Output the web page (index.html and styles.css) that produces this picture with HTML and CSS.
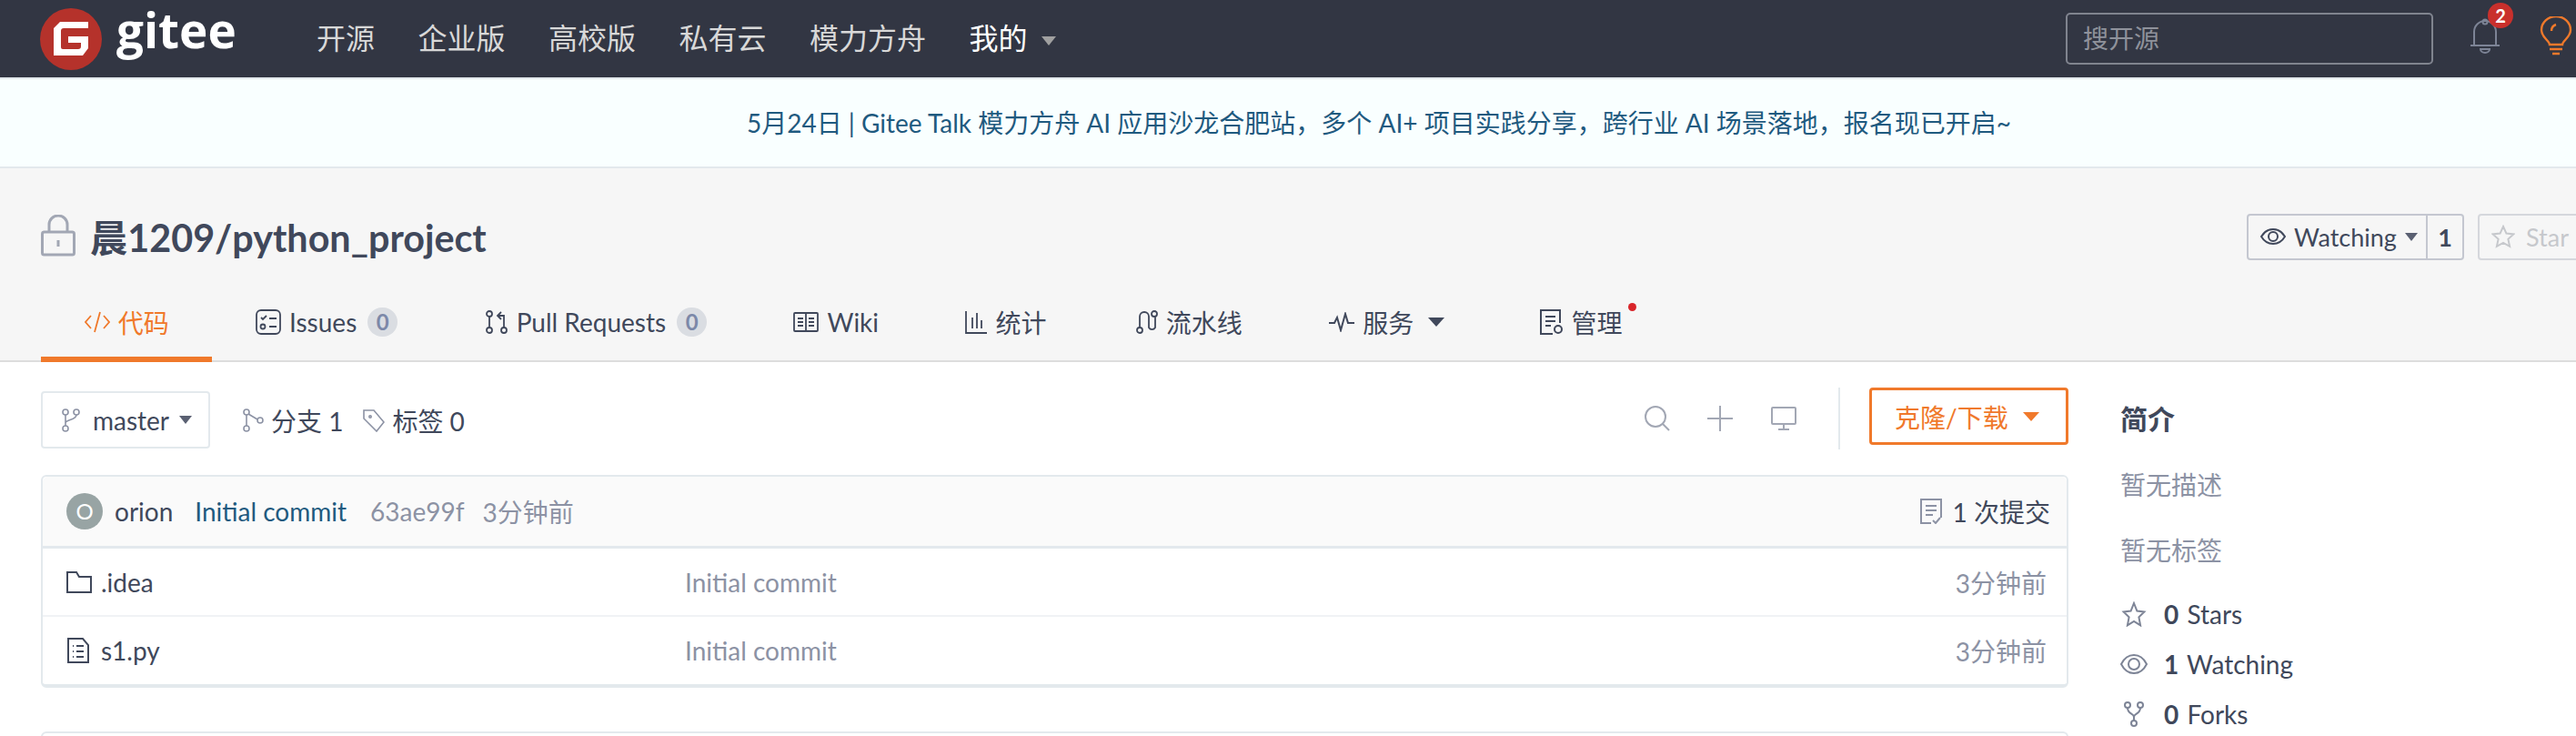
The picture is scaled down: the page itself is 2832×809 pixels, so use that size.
FILE: index.html
```html
<!DOCTYPE html>
<html lang="zh-CN">
<head>
    <meta charset="UTF-8">
    <title>晨1209/python_project</title>
    <link rel="stylesheet" href="styles.css">
</head>
<body>

<!-- top nav -->
<header class="topbar">
    <a class="logo">
        <svg class="logo-mark" viewBox="0 0 68 68"><circle cx="34" cy="34" r="34" fill="#b5322b"/><path d="M22 15h31v7H26a3 3 0 0 0-3 3v18a2 2 0 0 0 2 2h17a3 3 0 0 0 3-3v-4H31v-7h22v13l-6 8H15V22z" fill="#fff"/></svg>
        <span class="logo-text">gitee</span>
    </a>
    <nav class="topnav">
        <a>开源</a>
        <a>企业版</a>
        <a>高校版</a>
        <a>私有云</a>
        <a>模力方舟</a>
        <a class="mine">我的<i class="caret caret-gray"></i></a>
    </nav>
    <div class="search">搜开源</div>
    <div class="bell">
        <svg width="34" height="40" viewBox="0 0 34 40" fill="none" stroke="#7d8496" stroke-width="2"><path d="M1 31h32M5 31V16a12 12 0 0 1 24 0v15"/><circle cx="17" cy="5" r="2.5"/><path d="M12 35h10a5 4 0 0 1-10 0z"/></svg>
        <span class="badge">2</span>
    </div>
    <svg class="bulb" width="36" height="44" viewBox="0 0 36 44" fill="none" stroke="#f0792b" stroke-width="2.4"><path d="M11 31c0-4-9-8-9-16a16 15 0 0 1 32 0c0 8-9 12-9 16z"/><path d="M11 36h14M14 41h8M13 16c0-4 2-6 5-7"/></svg>
</header>

<div class="notice">5月24日 | Gitee Talk 模力方舟 AI 应用沙龙合肥站，多个 AI+ 项目实践分享，跨行业 AI 场景落地，报名现已开启~</div>

<section class="project-head">
    <div class="title-row">
        <h1 class="project-title">
            <svg width="38" height="46" viewBox="0 0 38 46" fill="none" stroke="#a2a7b4" stroke-width="3"><rect x="1.5" y="19" width="35" height="25" rx="2"/><path d="M9 19V11a10 10 0 0 1 20 0v8M19 28v7"/></svg>
            <span>晨1209/python_project</span>
        </h1>
        <div class="actions">
            <div class="btn-group">
                <span class="btn-main">
                    <svg width="28" height="20" viewBox="0 0 28 20" fill="none" stroke="#40485b" stroke-width="2"><path d="M1 10c3-5 8-8 13-8s10 3 13 8c-3 5-8 8-13 8S4 15 1 10z"/><circle cx="14" cy="10" r="5"/></svg>
                    Watching<i class="caret caret-dark"></i>
                </span>
                <span class="btn-count">1</span>
            </div>
            <div class="btn-star">
                <svg width="26" height="26" viewBox="0 0 26 26" fill="none" stroke="#c6c8cc" stroke-width="2"><path d="M13 2l3.400 7.500 8 .9-6 5.400 1.700 8L13 19.800 5.900 23.800l1.700-8-6-5.400 8-.9z"/></svg>
                Star
            </div>
        </div>
    </div>
    <nav class="tabs">
        <a class="tab active">
            <svg width="28" height="28" viewBox="0 0 28 28" fill="none" stroke="#f0792b" stroke-width="1.800"><path d="M7 7l-6 7 6 7M21 7l6 7-6 7M17 3l-6 22"/></svg>
            代码
        </a>
        <a class="tab">
            <svg width="28" height="28" viewBox="0 0 28 28" fill="none" stroke="#40485b" stroke-width="1.800"><rect x="1" y="1" width="26" height="26" rx="5"/><path d="M6 9l2 2 4-4M15 10h8M15 19h8"/><circle cx="8" cy="19" r="2.500"/></svg>
            Issues <span class="count">0</span>
        </a>
        <a class="tab">
            <svg width="26" height="28" viewBox="0 0 26 28" fill="none" stroke="#40485b" stroke-width="1.800"><circle cx="5" cy="5" r="3"/><circle cx="5" cy="23" r="3"/><circle cx="21" cy="23" r="3"/><path d="M5 8v12M21 20V7h-6M18 3l-4 4 4 4"/></svg>
            Pull Requests <span class="count">0</span>
        </a>
        <a class="tab">
            <svg width="28" height="24" viewBox="0 0 28 24" fill="none" stroke="#40485b" stroke-width="1.800"><rect x="1" y="2" width="26" height="20" rx="1"/><path d="M14 2v20M5 8h6M5 12h6M5 16h6M17 8h6M17 12h6M17 16h6"/></svg>
            Wiki
        </a>
        <a class="tab">
            <svg width="24" height="26" viewBox="0 0 24 26" fill="none" stroke="#40485b" stroke-width="1.800"><path d="M1 1v24h23M8 20V8M13 20V3M18 20v-9"/></svg>
            统计
        </a>
        <a class="tab tab-pipe">
            <svg width="24" height="28" viewBox="0 0 24 28" fill="none" stroke="#40485b" stroke-width="1.800"><circle cx="4" cy="23" r="3"/><circle cx="20" cy="5" r="3"/><path d="M4 20V8a5 5 0 0 1 10 0v12a4 4 0 0 0 7 0V8"/></svg>
            流水线
        </a>
        <a class="tab">
            <svg width="28" height="22" viewBox="0 0 28 22" fill="none" stroke="#40485b" stroke-width="2"><path d="M0 12h6l3-6 4 14 5-18 3 10h7"/></svg>
            服务<i class="caret caret-big"></i>
        </a>
        <a class="tab">
            <svg width="26" height="30" viewBox="0 0 26 30" fill="none" stroke="#40485b" stroke-width="2"><path d="M14 28H1V2h21v14M6 9h11M6 14h11M6 19h6"/><circle cx="20" cy="23" r="4"/></svg>
            管理<span class="dot"></span>
        </a>
    </nav>
</section>

<main class="content">
    <div class="repo-col">
        <div class="toolbar">
            <div class="toolbar-left">
                <span class="branch-btn">
                    <svg width="20" height="26" viewBox="0 0 20 26" fill="none" stroke="#8c92a4" stroke-width="1.600"><circle cx="4" cy="4" r="3"/><circle cx="16" cy="4" r="3"/><circle cx="4" cy="22" r="3"/><path d="M4 7v12M16 7c0 6-12 5-12 9"/></svg>
                    master<i class="caret caret-small"></i>
                </span>
                <span class="ref">
                    <svg width="24" height="26" viewBox="0 0 24 26" fill="none" stroke="#8c92a4" stroke-width="1.600"><circle cx="5" cy="4" r="3"/><circle cx="5" cy="22" r="3"/><circle cx="20" cy="13" r="3"/><path d="M5 7v12M7 6l10 6"/></svg>
                    分支 1
                </span>
                <span class="ref">
                    <svg width="24" height="26" viewBox="0 0 24 26" fill="none" stroke="#8c92a4" stroke-width="1.600"><path d="M1 2h11l11 13-8 10L1 11z"/><circle cx="8" cy="9" r="1.200"/></svg>
                    标签 0
                </span>
            </div>
            <div class="toolbar-right">
                <svg width="28" height="28" viewBox="0 0 28 28" fill="none" stroke="#a2a7b4" stroke-width="2"><circle cx="12" cy="12" r="11"/><path d="M20 20l7 7"/></svg>
                <svg width="28" height="28" viewBox="0 0 28 28" fill="none" stroke="#a2a7b4" stroke-width="2"><path d="M14 0v28M0 14h28"/></svg>
                <svg width="30" height="26" viewBox="0 0 30 26" fill="none" stroke="#a2a7b4" stroke-width="2"><rect x="2" y="1" width="26" height="18" rx="1"/><path d="M15 19v6M9 25h12"/></svg>
                <span class="toolbar-sep"></span>
                <span class="clone-btn">克隆/下载<i class="caret caret-orange"></i></span>
            </div>
        </div>

        <div class="file-box">
            <div class="commit-head">
                <span class="avatar">O</span>
                <span class="author">orion</span>
                <a class="commit-msg">Initial commit</a>
                <span class="muted hash">63ae99f</span>
                <span class="muted">3分钟前</span>
                <span class="commit-count">
                    <svg width="24" height="28" viewBox="0 0 24 28" fill="none" stroke="#8c92a4" stroke-width="2"><path d="M12 27H1V1h22v20M6 8h12M6 13h12M6 18h8M14 24l3 3 5-6"/></svg>
                    1 次提交
                </span>
            </div>
            <div class="file-row">
                <span class="file-name">
                    <svg width="28" height="26" viewBox="0 0 28 26" fill="none" stroke="#40485b" stroke-width="2"><path d="M1 24V2h10l3 5h13v17z"/></svg>
                    .idea
                </span>
                <span class="file-msg">Initial commit</span>
                <span class="file-time">3分钟前</span>
            </div>
            <div class="file-row">
                <span class="file-name">
                    <svg width="28" height="28" viewBox="0 0 28 28" fill="none" stroke="#40485b" stroke-width="2"><path d="M2 1h16l6 7v19H2zM7 9h1M11 9h8M7 15h1M11 15h8M7 21h1M11 21h8"/></svg>
                    s1.py
                </span>
                <span class="file-msg">Initial commit</span>
                <span class="file-time">3分钟前</span>
            </div>
        </div>
        <div class="readme-box"></div>
    </div>

    <aside class="sidebar">
        <h3 class="side-title">简介</h3>
        <p class="side-text">暂无描述</p>
        <p class="side-text">暂无标签</p>
        <div class="stat stat-first">
            <svg width="24" height="28" viewBox="0 0 26 28" fill="none" stroke="#7d8496" stroke-width="2"><path d="M13 2l3.400 8.500 8 .9-6 6 1.700 9L13 22l-7.100 4.400 1.700-9-6-6 8-.9z"/></svg>
            <span><b>0</b> Stars</span>
        </div>
        <div class="stat">
            <svg width="30" height="24" viewBox="0 0 30 24" fill="none" stroke="#7d8496" stroke-width="2"><path d="M1 12c3-6 8-10 14-10s11 4 14 10c-3 6-8 10-14 10S4 18 1 12z"/><circle cx="15" cy="12" r="6"/></svg>
            <span><b>1</b> Watching</span>
        </div>
        <div class="stat">
            <svg width="24" height="28" viewBox="0 0 24 28" fill="none" stroke="#7d8496" stroke-width="2"><circle cx="5" cy="4" r="3"/><circle cx="19" cy="4" r="3"/><circle cx="12" cy="24" r="3"/><path d="M5 7c0 7 7 6 7 10v4M19 7c0 7-7 6-7 10"/></svg>
            <span><b>0</b> Forks</span>
        </div>
    </aside>
</main>

</body>
</html>
```

FILE: styles.css
```css
* {
    box-sizing: border-box;
}
html, body {
    height: 809px;
    overflow: hidden;
}
body {
    margin: 0;
    font-family: Lato, "Noto Sans CJK SC", sans-serif;
    font-size: 28px;
    color: #40485b;
    background: #fff;
}
p, h1, h3 {
    margin: 0;
}
i {
    font-style: normal;
}

/* carets */
.caret {
    display: inline-block;
    width: 0;
    height: 0;
    border-style: solid;
    border-color: transparent;
    border-bottom-width: 0;
}
.caret-gray {
    margin-left: 15px;
    border-width: 10px 8px 0;
    border-top-color: #a0a0a0;
    vertical-align: middle;
}
.caret-dark {
    margin-left: 9px;
    border-width: 9px 7px 0;
    border-top-color: #5a6072;
    vertical-align: middle;
}
.caret-big {
    margin-left: 7px;
    margin-right: 9px;
    border-width: 10px 9px 0;
    border-top-color: #40485b;
    vertical-align: middle;
}
.caret-small {
    margin-left: 11px;
    border-width: 9px 7px 0;
    border-top-color: #5a6072;
    vertical-align: middle;
}
.caret-orange {
    margin-left: 16px;
    border-width: 10px 9px 0;
    border-top-color: #f0792b;
    vertical-align: middle;
}

/* top nav */
.topbar {
    display: flex;
    align-items: center;
    height: 87px;
    padding-left: 44px;
    background: #323643;
    border-bottom: 2px solid #e3e9ed;
}
.logo {
    display: flex;
    align-items: center;
    gap: 16px;
    width: 304px;
}
.logo-mark {
    width: 68px;
    height: 68px;
}
.logo-text {
    margin-bottom: 20px;
    color: #fff;
    font-family: "Open Sans", sans-serif;
    font-weight: 700;
    font-size: 53px;
    line-height: 68px;
}
.topnav {
    display: flex;
    gap: 47.500px;
    margin-bottom: 6px;
    font-size: 32px;
    color: #d8d8d8;
}
.search {
    width: 404px;
    height: 57px;
    margin-left: auto;
    padding: 0 17px;
    border: 2px solid #80848f;
    border-radius: 5px;
    color: #8f929b;
    line-height: 52px;
}
.mine {
    color: #fff;
}
.bell {
    position: relative;
    display: flex;
    margin-left: 40px;
    margin-top: -8px;
}
.badge {
    position: absolute;
    top: -16px;
    left: 20px;
    width: 28px;
    height: 28px;
    border-radius: 50%;
    background: #c9302c;
    color: #fff;
    font-size: 20px;
    font-weight: 700;
    line-height: 28px;
    text-align: center;
}
.bulb {
    margin-left: 43px;
    margin-right: 4px;
    margin-top: -6px;
}

/* banner */
.notice {
    height: 98px;
    padding-left: 200px;
    background: #f9ffff;
    border-bottom: 2px solid #e3e9ed;
    color: #1f5a7f;
    font-size: 28px;
    line-height: 96px;
    text-align: center;
    white-space: nowrap;
}

/* repo header */
.project-head {
    height: 213px;
    padding: 49px 0 0 45px;
    background: #f6f6f6;
    border-bottom: 2px solid #ddd;
}
.title-row {
    display: flex;
    justify-content: space-between;
    align-items: center;
    height: 52px;
    margin-right: -4px;
}
.project-title {
    display: flex;
    align-items: center;
    gap: 16px;
    margin-top: -2px;
    font-size: 41.300px;
    font-weight: 700;
}
.actions {
    display: flex;
    gap: 15px;
    font-size: 27px;
}
.btn-group {
    display: flex;
    width: 239px;
    height: 51px;
    border: 2px solid #c4c7d0;
    border-radius: 4px;
}
.btn-main {
    display: flex;
    align-items: center;
    gap: 9px;
    width: 197px;
    padding-left: 13px;
    border-right: 2px solid #c4c7d0;
    white-space: nowrap;
}
.btn-main .caret {
    margin-left: 0;
}
.btn-count {
    flex: 1;
    font-weight: 700;
    line-height: 47px;
    text-align: center;
}
.btn-star {
    display: flex;
    align-items: center;
    gap: 12px;
    width: 112px;
    height: 51px;
    padding-left: 13px;
    border: 2px solid #d5d7dc;
    border-radius: 4px;
    color: #c6c8cc;
}

/* tabs */
.tabs {
    display: flex;
    margin-top: 47px;
    height: 63px;
}
.tab {
    position: relative;
    display: flex;
    align-items: center;
    gap: 9px;
    height: 65px;
    padding: 0 47.700px 23px;
    white-space: nowrap;
}
.tab.active {
    color: #f0792b;
    border-bottom: 6px solid #f0792b;
    padding-bottom: 17px;
}
.tab-pipe {
    margin-left: 3px;
}
.count {
    display: inline-block;
    width: 33px;
    height: 32px;
    margin-left: 3px;
    border-radius: 16px;
    background: #dadde2;
    color: #7c88a8;
    font-size: 24px;
    font-weight: 700;
    line-height: 32px;
    text-align: center;
}
.dot {
    position: absolute;
    top: 0;
    right: 41px;
    width: 9px;
    height: 9px;
    border-radius: 50%;
    background: #d9252a;
}

/* main */
.content {
    display: flex;
    gap: 57px;
    padding: 28px 0 0 45px;
}
.repo-col {
    flex: 0 0 2229px;
}
.toolbar {
    display: flex;
    justify-content: space-between;
    height: 68px;
}
.toolbar-left {
    display: flex;
    align-items: flex-start;
}
.branch-btn {
    display: flex;
    align-items: center;
    gap: 14px;
    width: 186px;
    height: 63px;
    margin-top: 4px;
    padding-left: 21px;
    border: 2px solid #e3e9ed;
    border-radius: 4px;
}
.branch-btn .caret {
    margin-left: -3px;
}
.ref {
    display: flex;
    align-items: center;
    gap: 8px;
    height: 63px;
    margin-top: 4px;
    margin-left: 35px;
}
.ref + .ref {
    margin-left: 22px;
}
.toolbar-right {
    display: flex;
    align-items: center;
    gap: 41px;
}
.toolbar-sep {
    width: 2px;
    height: 68px;
    margin: 0 -9px 0 4px;
    background: #e3e9ed;
}
.clone-btn {
    display: flex;
    align-items: center;
    width: 219px;
    height: 63px;
    padding-left: 25px;
    margin-bottom: 5px;
    border: 3px solid #f0792b;
    border-radius: 4px;
    color: #f0792b;
}

/* file list */
.file-box {
    margin-top: 28px;
    border: 2px solid #e3e9ed;
    border-bottom-width: 4px;
    border-radius: 6px;
}
.commit-head {
    display: flex;
    align-items: center;
    gap: 24px;
    height: 79px;
    padding: 0 18px 0 26px;
    background: #fafafa;
    border-bottom: 3px solid #e3e9ed;
    border-radius: 6px 6px 0 0;
}
.avatar {
    width: 40px;
    height: 40px;
    margin-right: -11px;
    border-radius: 50%;
    background: #98a4a4;
    color: #fff;
    font-size: 24px;
    line-height: 40px;
    text-align: center;
}
.commit-msg {
    color: #1f5a7f;
}
.muted {
    color: #8c92a4;
}
.hash {
    margin-left: 2px;
    margin-right: -4px;
}
.commit-count {
    display: flex;
    align-items: center;
    gap: 12px;
    margin-left: auto;
}
.file-row {
    display: flex;
    align-items: center;
    height: 75px;
    padding: 0 22px 0 26px;
    border-bottom: 2px solid #f0f2f5;
}
.file-row:last-child {
    height: 74px;
    border-bottom: 0;
}
.file-name {
    display: flex;
    align-items: center;
    gap: 10px;
    flex: 0 0 680px;
}
.file-msg {
    flex: 1;
    color: #8c92a4;
}
.file-time {
    color: #8c92a4;
}
.readme-box {
    height: 40px;
    margin-top: 48px;
    border: 2px solid #e3e9ed;
    border-bottom: 0;
    border-radius: 6px 6px 0 0;
}

/* sidebar */
.sidebar {
    flex: 1;
    padding-top: 14px;
}
.side-title {
    font-size: 30px;
    line-height: 40px;
}
.side-text {
    margin-top: 33px;
    color: #8c92a4;
    line-height: 40px;
}
.side-text + .side-text {
    margin-top: 32px;
}
.stat {
    display: flex;
    align-items: center;
    gap: 18px;
    height: 40px;
    margin-top: 15px;
}
.stat svg {
    width: 30px;
}
.stat b {
    font-weight: 700;
    margin-right: 2px;
}
.stat-first {
    margin-top: 30px;
}
```
